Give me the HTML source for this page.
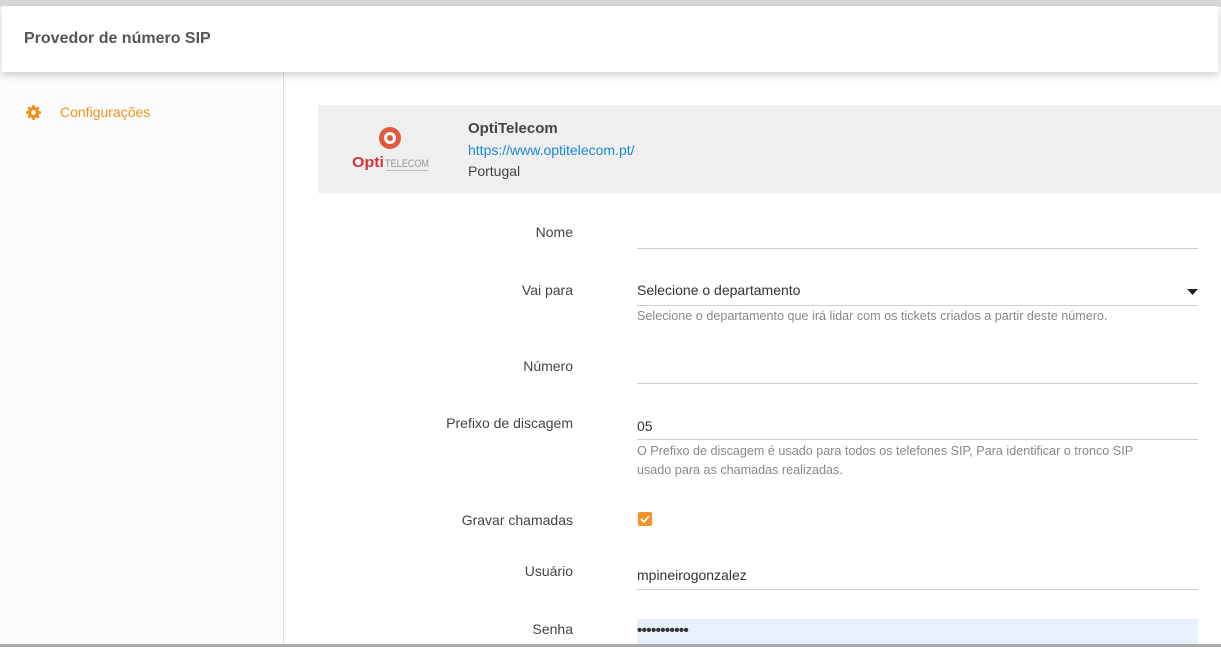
<!DOCTYPE html>
<html><head><meta charset="utf-8"><style>
*{margin:0;padding:0;box-sizing:border-box}
body{width:1221px;height:647px;overflow:hidden;background:#fff;font-family:"Liberation Sans",sans-serif;position:relative;color:#333}
.top{position:absolute;left:0;top:0;width:1221px;height:7px;background:#d9d9d9}
.hdr{position:absolute;left:2px;top:6px;width:1216px;height:66px;background:#fff;box-shadow:0 3px 8px rgba(0,0,0,.2);z-index:2}
.hdr h1{position:absolute;left:22px;top:24px;font-size:16px;font-weight:bold;color:#555}
.side{position:absolute;left:0;top:72px;width:284px;height:575px;background:#fcfcfc;border-right:1px solid #ddd}
.cfg{position:absolute;left:60px;top:104px;font-size:14px;color:#f0901e}
.gear{position:absolute;left:26px;top:105px}
.card{position:absolute;left:318px;top:105px;width:903px;height:88px;background:#efefef}
.t{position:absolute;font-size:14px}
.lbl{position:absolute;right:648px;font-size:14px;color:#444;text-align:right}
.line{position:absolute;left:637px;width:561px;height:1px;background:#ccc}
.help{position:absolute;left:637px;font-size:12.6px;color:#888;line-height:19px}
.bottom{position:absolute;left:0;top:644px;width:1221px;height:3px;background:#aaa}
</style></head><body>
<div class="top"></div>
<div class="hdr"><h1>Provedor de número SIP</h1></div>
<div class="side"></div>
<svg class="gear" width="15" height="15" viewBox="0 0 16 16"><path fill="#f0901e" d="M6.8 0h2.4l.4 2.2 1.3.6 1.9-1.3 1.7 1.7-1.3 1.9.6 1.3 2.2.4v2.4l-2.2.4-.6 1.3 1.3 1.9-1.7 1.7-1.9-1.3-1.3.6-.4 2.2H6.8l-.4-2.2-1.3-.6-1.9 1.3-1.7-1.7 1.3-1.9-.6-1.3L0 9.2V6.8l2.2-.4.6-1.3-1.3-1.9 1.7-1.7 1.9 1.3 1.3-.6zM8 5.5a2.5 2.5 0 100 5 2.5 2.5 0 000-5z"/></svg>
<div class="cfg">Configurações</div>
<div class="card">
<svg style="position:absolute;left:34px;top:20px" width="80" height="50"><circle cx="38" cy="13" r="11" fill="#e05a3e"/><circle cx="38" cy="13" r="6" fill="#fff"/><circle cx="38" cy="13" r="3" fill="#e05a3e"/><text x="0" y="42" font-family="Liberation Sans" font-weight="bold" font-size="15" fill="#d8343a" textLength="32" lengthAdjust="spacingAndGlyphs">Opti</text><text x="33" y="42" font-family="Liberation Sans" font-size="11" fill="#999" textLength="44" lengthAdjust="spacingAndGlyphs">TELECOM</text><rect x="34" y="45" width="42" height="1" fill="#bbb"/></svg>
<div class="t" style="left:150px;top:15px;font-weight:bold;font-size:15px;color:#444">OptiTelecom</div>
<div class="t" style="left:150px;top:37px;color:#1a8ad4">https://www.optitelecom.pt/</div>
<div class="t" style="left:150px;top:58px;color:#444">Portugal</div>
</div>
<div class="lbl" style="top:224px">Nome</div><div class="line" style="top:248px"></div>
<div class="lbl" style="top:282px">Vai para</div>
<div class="t" style="left:637px;top:282px">Selecione o departamento</div>
<svg style="position:absolute;left:1187px;top:289px" width="11" height="6"><path d="M0 0h11L5.5 6z" fill="#222"/></svg>
<div class="line" style="top:305px"></div>
<div class="help" style="top:307px">Selecione o departamento que irá lidar com os tickets criados a partir deste número.</div>
<div class="lbl" style="top:358px">Número</div><div class="line" style="top:383px"></div>
<div class="lbl" style="top:415px">Prefixo de discagem</div>
<div class="t" style="left:637px;top:418px">05</div>
<div class="line" style="top:439px"></div>
<div class="help" style="top:442px">O Prefixo de discagem é usado para todos os telefones SIP, Para identificar o tronco SIP<br>usado para as chamadas realizadas.</div>
<div class="lbl" style="top:512px">Gravar chamadas</div>
<div style="position:absolute;left:638px;top:512px;width:14px;height:14px;background:#f5922a;border-radius:2px"><svg width="14" height="14"><path d="M3 7l3 3 5-6" stroke="#fff" stroke-width="1.6" fill="none"/></svg></div>
<div class="lbl" style="top:563px">Usuário</div>
<div class="t" style="left:637px;top:567px">mpineirogonzalez</div>
<div class="line" style="top:589px"></div>
<div class="lbl" style="top:621px">Senha</div>
<div style="position:absolute;left:637px;top:619px;width:561px;height:25px;background:#e8f0fe"></div>
<div class="t" style="left:637px;top:622px;font-weight:bold;font-size:15px;letter-spacing:-0.6px">•••••••••••</div>
<div class="bottom"></div>
</body></html>
